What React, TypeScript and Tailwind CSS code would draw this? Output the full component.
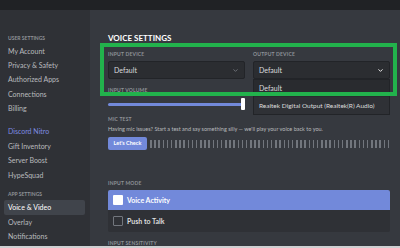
import { ChevronDown } from 'lucide-react';

const userItems = ['My Account', 'Privacy & Safety', 'Authorized Apps', 'Connections', 'Billing'];
const extraItems = ['Gift Inventory', 'Server Boost', 'HypeSquad'];

function Label({ children }: { children: React.ReactNode }) {
  return (
    <div className="text-[5px] leading-[6px] font-bold uppercase tracking-[0.2px] text-[#8e9297]">{children}</div>
  );
}

function Sidebar() {
  return (
    <div className="w-[90px] shrink-0 bg-[#2f3136] pt-[25px] pl-[4px] pr-[5px]">
      <div className="px-[4px] text-[5px] leading-[6px] font-bold uppercase text-[#8e9297]">User Settings</div>
      <div className="mt-[3px]">
        {userItems.map((item) => (
          <div key={item} className="h-[14.3px] flex items-center px-[4px] text-[7px] text-[#b9bbbe]">
            {item}
          </div>
        ))}
      </div>
      <div className="h-[9px]" />
      <div className="h-[14.3px] flex items-center px-[4px] text-[7px] text-[#7e8be0]">Discord Nitro</div>
      {extraItems.map((item) => (
        <div key={item} className="h-[14.5px] flex items-center px-[4px] text-[7px] text-[#b9bbbe]">
          {item}
        </div>
      ))}
      <div className="h-[9px]" />
      <div className="px-[4px] text-[5px] leading-[6px] font-bold uppercase text-[#8e9297]">App Settings</div>
      <div className="mt-[3px] h-[14.3px] flex items-center px-[4px] text-[7px] text-white bg-[#40444b] rounded-[2px]">
        Voice &amp; Video
      </div>
      <div className="h-[14.5px] flex items-center px-[4px] text-[7px] text-[#b9bbbe]">Overlay</div>
      <div className="h-[14.5px] flex items-center px-[4px] text-[7px] text-[#b9bbbe]">Notifications</div>
    </div>
  );
}

function Select({ active }: { active?: boolean }) {
  return (
    <div className="h-[18px] flex items-center justify-between px-[5px] rounded-[2px] border border-[#222428] bg-[#2b2d31] text-[7px] text-[#dcddde]">
      <span>Default</span>
      <ChevronDown className={active ? 'w-[7px] h-[7px] text-white' : 'w-[7px] h-[7px] text-[#72767d]'} strokeWidth={3} />
    </div>
  );
}

export default function App() {
  const bars = Array.from({ length: 58 });
  return (
    <div
      className="w-[400px] h-[248px] overflow-hidden flex flex-col bg-[#36393f]"
      style={{ fontFamily: 'Lato, "Open Sans", sans-serif' }}
    >
      <div className="h-[10px] shrink-0 bg-[#202225]" />
      <div className="flex flex-1 min-h-0">
        <Sidebar />
        <div className="relative flex-1 pl-[18px] pr-[10px] pt-[23px]">
          <div className="text-[8px] leading-[10px] font-bold uppercase text-white">Voice Settings</div>

          <div className="mt-[8px] grid grid-cols-2 gap-x-[8px]">
            <div>
              <Label>Input Device</Label>
              <div className="mt-[4px]">
                <Select />
              </div>
            </div>
            <div className="relative">
              <Label>Output Device</Label>
              <div className="mt-[4px]">
                <Select active />
              </div>
              {/* open dropdown menu */}
              <div className="absolute left-0 right-0 top-[28px] z-10 bg-[#2f3136] border border-[#222428] text-[7px] text-[#dcddde]">
                <div className="h-[17px] flex items-center px-[5px] bg-[#292b2f]">Default</div>
                <div className="h-[17px] flex items-center px-[5px] text-[6.5px]">Realtek Digital Output (Realtek(R) Audio)</div>
              </div>
            </div>
          </div>

          <div className="mt-[8px]">
            <Label>Input Volume</Label>
          </div>
          <div className="mt-[5px] w-[137px] h-[12px] flex items-center relative">
            <div className="h-[3px] flex-1 rounded-full bg-[#7289da]" />
            <div className="absolute right-0 top-0 w-[4px] h-[12px] rounded-[1px] bg-white" />
          </div>

          <div className="mt-[6px]">
            <Label>Mic Test</Label>
          </div>
          <div className="mt-[4px] text-[5.5px] leading-[7px] text-[#b9bbbe] whitespace-nowrap">
            Having mic issues? Start a test and say something silly — we&apos;ll play your voice back to you.
          </div>
          <div className="mt-[4px] flex items-center gap-[3px]">
            <div className="w-[39px] h-[13px] rounded-[2px] bg-[#7289da] flex items-center justify-center text-[5.5px] font-bold text-white">
              Let&apos;s Check
            </div>
            <div className="flex-1 flex justify-between h-[8px]">
              {bars.map((_, i) => (
                <div key={i} className="w-[1.5px] h-full bg-[#72767d]" />
              ))}
            </div>
          </div>

          <div className="mt-[30px]">
            <Label>Input Mode</Label>
          </div>
          <div className="mt-[4px] rounded-[2px] overflow-hidden">
            <div className="h-[20px] flex items-center gap-[4px] px-[5px] bg-[#7289da]">
              <div className="w-[10px] h-[10px] rounded-[1px] bg-white" />
              <span className="text-[7px] font-bold text-white">Voice Activity</span>
            </div>
            <div className="h-[22px] flex items-center gap-[4px] px-[5px] bg-[#2f3136]">
              <div className="w-[10px] h-[10px] rounded-[1px] border border-[#72767d]" />
              <span className="text-[7px] font-bold text-[#dcddde]">Push to Talk</span>
            </div>
          </div>
          <div className="mt-[8px]">
            <Label>Input Sensitivity</Label>
          </div>

          {/* green highlight annotation */}
          <div className="absolute left-[10px] top-[33px] w-[297px] h-[53px] border-[4px] border-[#22b24c] z-20 pointer-events-none" />
        </div>
      </div>
      <div className="h-[2px] shrink-0 bg-[#cfd0d2]" />
    </div>
  );
}
